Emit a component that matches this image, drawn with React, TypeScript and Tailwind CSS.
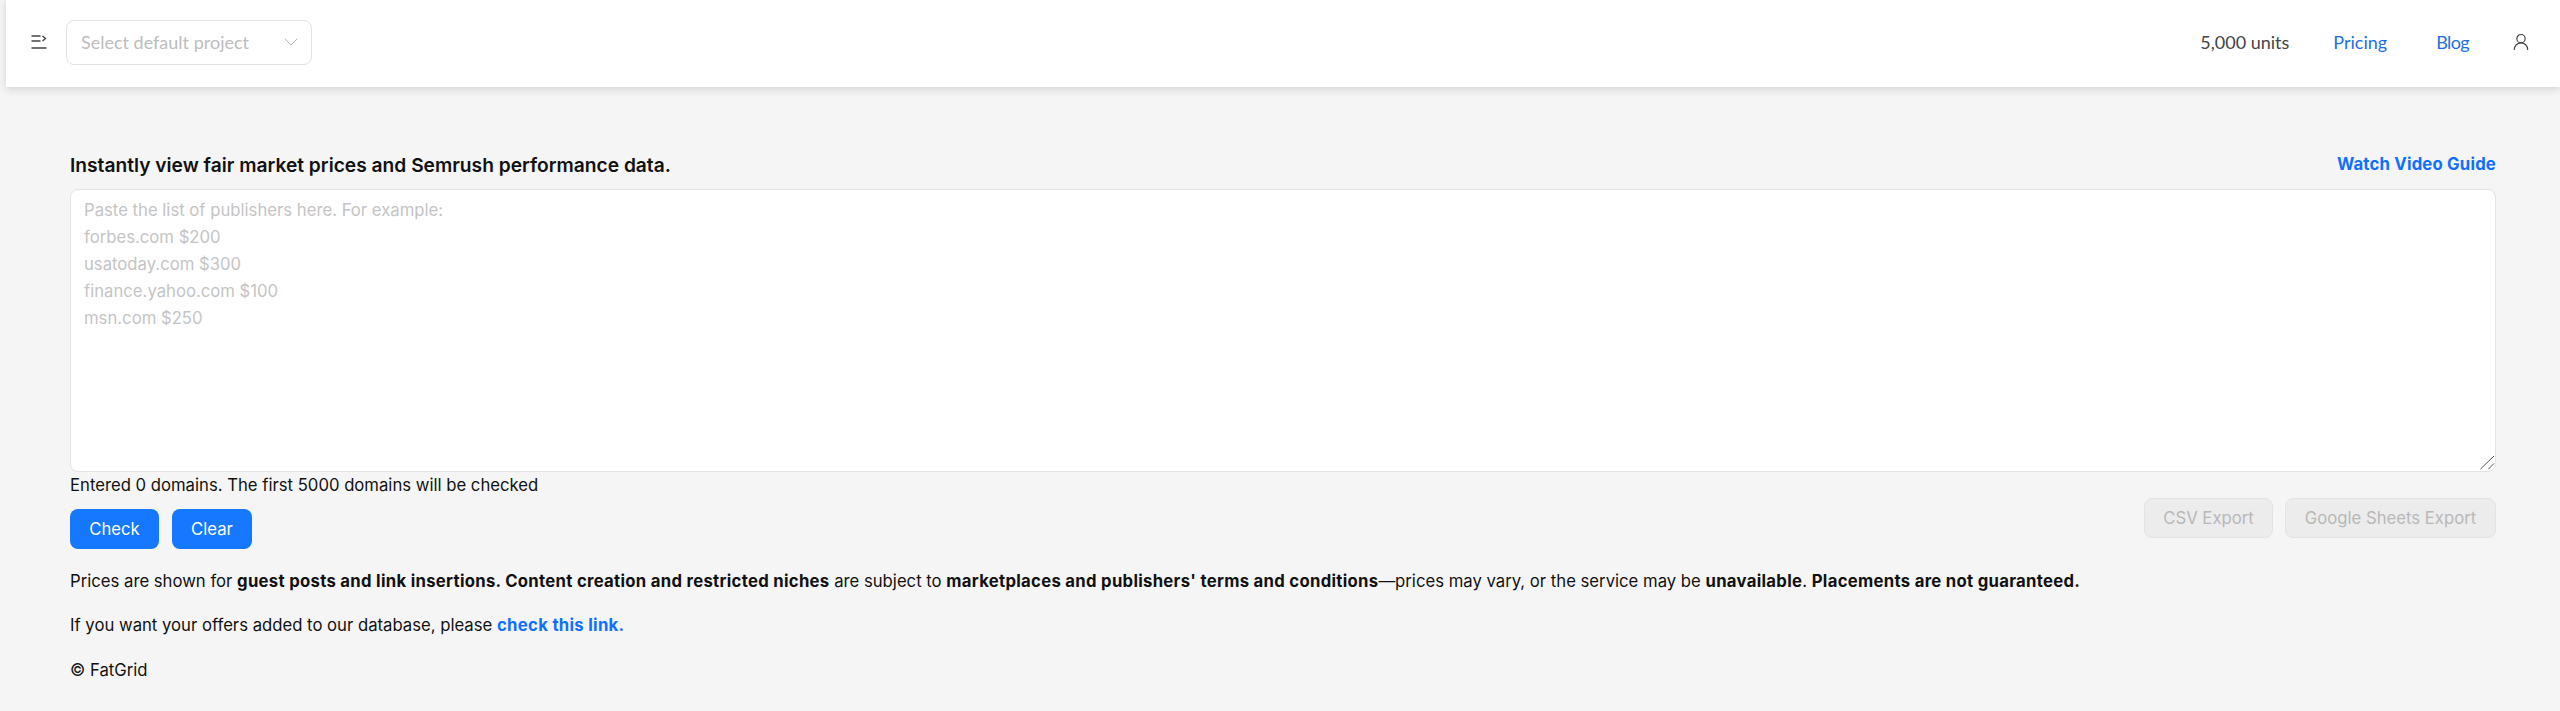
import { ChevronDown, UserRound } from "lucide-react";

const placeholder = `Paste the list of publishers here. For example:
forbes.com $200
usatoday.com $300
finance.yahoo.com $100
msn.com $250`;

function Header() {
  return (
    <header className="flex h-[87px] items-center justify-between bg-white pb-[3px] pl-[24px] pr-[29px] font-['Lato',sans-serif] text-[18px] shadow-[0_2px_8px_rgba(0,0,0,0.15)]">
      <div className="flex items-center gap-[18px]">
        <svg width="18" height="18" viewBox="0 0 18 18" fill="none" stroke="#444" strokeWidth="1.4">
          <path d="M1.500 3h9M1.500 8h9M1.500 15h15M12.500 3l3 2.500-3 2.500" />
        </svg>
        <div className="flex h-[45px] w-[246px] items-center justify-between rounded-[8px] border border-[#e2e2e2] pl-[14px] pr-[8px] text-[#bdbdbd]">
          <span>Select default project</span>
          <ChevronDown size={24} strokeWidth={1} className="text-[#b5b5b5]" />
        </div>
      </div>
      <div className="flex items-center">
        <span className="text-[#444]">5,000 units</span>
        <a className="ml-[44px] text-[#1f6fe0]">Pricing</a>
        <a className="ml-[49px] tracking-[-0.6px] text-[#1f6fe0]">Blog</a>
        <UserRound size={20} strokeWidth={1.4} className="ml-[42px] text-[#444]" />
      </div>
    </header>
  );
}

export default function App() {
  return (
    <div className="min-h-[711px] bg-[#f5f5f5] pl-[6px] font-['Inter',sans-serif] text-[16.7px] text-[#111]">
      <Header />
      <main className="pl-[64px] pr-[64px]">
        <div className="flex items-center justify-between pt-[65px]">
          <h1 className="text-[19.2px] font-semibold leading-[24px]">Instantly view fair market prices and Semrush performance data.</h1>
          <a className="font-bold tracking-[0.2px] text-[#0f6fff]">Watch Video Guide</a>
        </div>
        <div className="relative mt-[12px]">
          <textarea
            className="block h-[283px] w-full resize-none rounded-[8px] border border-[#e3e3e3] bg-white px-[13px] py-[7px] text-[16.7px] leading-[27px] placeholder:text-[#c4c4c4]"
            placeholder={placeholder}
          />
          <svg className="pointer-events-none absolute bottom-[2px] right-[1px]" width="16" height="15" viewBox="0 0 16 15" fill="none" stroke="#555" strokeWidth="1">
            <path d="M1.500 14L15 1M9.500 14L15 8.500" />
          </svg>
        </div>
        <div className="flex items-start justify-between">
          <div>
            <p className="mt-[1px] leading-[24px]">Entered 0 domains. The first 5000 domains will be checked</p>
            <div className="mt-[12px] flex gap-[12px]">
              <button className="h-[40px] w-[89px] rounded-[8px] bg-[#1677ff] text-white">Check</button>
              <button className="ml-px h-[40px] w-[80px] rounded-[8px] bg-[#1677ff] text-white">Clear</button>
            </div>
          </div>
          <div className="mt-[26px] flex gap-[12px]">
            <button className="h-[40px] w-[129px] rounded-[8px] border border-[#e3e3e3] bg-[#ececec] text-[#b8b8b8]">CSV Export</button>
            <button className="h-[40px] w-[211px] rounded-[8px] border border-[#e3e3e3] bg-[#ececec] text-[#b8b8b8]">Google Sheets Export</button>
          </div>
        </div>
        <p className="mt-[20px] leading-[24px]">
          Prices are shown for <b className="font-bold tracking-[0.3px]">guest posts and link insertions. Content creation and restricted niches</b> are subject to <b className="font-bold tracking-[0.3px]">marketplaces and publishers' terms and conditions</b>—prices may vary, or the service may be <b className="font-bold tracking-[0.3px]">unavailable</b>. <b className="font-bold tracking-[0.3px]">Placements are not guaranteed.</b>
        </p>
        <p className="mt-[20px] leading-[24px]">
          If you want your offers added to our database, please <a className="font-bold tracking-[0.3px] text-[#0f6fff]">check this link.</a>
        </p>
        <p className="mt-[21px] leading-[24px]">© FatGrid</p>
      </main>
    </div>
  );
}
